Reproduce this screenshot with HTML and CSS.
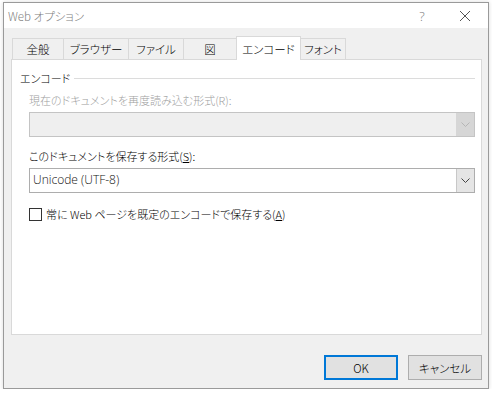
FILE: index.html
```html
<!DOCTYPE html>
<html lang="ja">
<head>
    <meta charset="UTF-8">
    <title>Web オプション</title>
    <link rel="stylesheet" href="styles.css">
</head>
<body>
    <div class="dialog">
        <div class="titlebar">
            <span class="title">Web オプション</span>
            <span class="help">?</span>
            <span class="close">
                <svg width="12" height="12" viewBox="0 0 12 12"><path d="M1 1L11 11M11 1L1 11" stroke="#555" stroke-width="1" fill="none"/></svg>
            </span>
        </div>
        <div class="content">
            <div class="tabs">
                <div class="tab t1">全般</div>
                <div class="tab t2">ブラウザー</div>
                <div class="tab t3">ファイル</div>
                <div class="tab t4">図</div>
                <div class="tab t5 active">エンコード</div>
                <div class="tab t6">フォント</div>
            </div>
            <div class="panel">
                <div class="group-head">
                    <span>エンコード</span>
                    <div class="line"></div>
                </div>
                <div class="group">
                    <div class="label disabled">現在のドキュメントを再度読み込む形式(R):</div>
                    <div class="select is-disabled">
                        <div class="value"></div>
                        <div class="arrow">
                            <svg width="9" height="5" viewBox="0 0 9 5"><path d="M0.5 0.5L4.5 4.5L8.5 0.5" stroke="#b5b5b5" fill="none"/></svg>
                        </div>
                    </div>
                    <div class="label">このドキュメントを保存する形式(<u>S</u>):</div>
                    <div class="select">
                        <div class="value">Unicode (UTF-8)</div>
                        <div class="arrow">
                            <svg width="9" height="5" viewBox="0 0 9 5"><path d="M0.5 0.5L4.5 4.5L8.5 0.5" stroke="#444" fill="none"/></svg>
                        </div>
                    </div>
                    <label class="check">
                        <span class="box"></span>
                        <span>常に Web ページを既定のエンコードで保存する(<u>A</u>)</span>
                    </label>
                </div>
            </div>
            <div class="footer">
                <button class="btn default">OK</button>
                <button class="btn">キャンセル</button>
            </div>
        </div>
    </div>
</body>
</html>
```

FILE: styles.css
```css
body {
    margin: 0;
    background: #fff;
    font-family: "Noto Sans CJK JP", "Noto Sans", sans-serif;
    font-size: 11px;
    font-weight: 300;
    font-feature-settings: "palt";
    color: #000;
}
.dialog {
    margin: 2px 0 0 3px;
    width: 486px;
    height: 387px;
    box-sizing: border-box;
    border: 1px solid #9a9a9a;
    background: #f0f0f0;
    display: flex;
    flex-direction: column;
    box-shadow: 0 0 4px rgba(0,0,0,0.15);
}
.titlebar {
    height: 25px;
    background: #fff;
    display: flex;
    align-items: center;
    padding-left: 4px;
    color: #808080;
    font-size: 11.5px;
}
.title {
    flex: 1;
}
.help {
    width: 40px;
    text-align: center;
    color: #777;
    font-family: "Open Sans", sans-serif;
    font-size: 13px;
}
.close {
    width: 46px;
    display: flex;
    justify-content: center;
}
.content {
    flex: 1;
    display: flex;
    flex-direction: column;
    padding: 7px 6px 0 7px;
}
.tabs {
    display: flex;
    align-items: flex-end;
    height: 24px;
    padding-left: 1px;
}
.tab {
    height: 21px;
    box-sizing: border-box;
    border: 1px solid #d9d9d9;
    border-bottom: none;
    margin-right: -1px;
    display: flex;
    align-items: center;
    justify-content: center;
    background: #f0f0f0;
    font-size: 11.5px;
}
.t1 { width: 52px; }
.t2 { width: 66px; }
.t3 { width: 56px; }
.t4 { width: 54px; }
.t5 { width: 65px; }
.t6 { width: 46px; }
.tab.active {
    height: 24px;
    background: #fff;
    margin-bottom: -1px;
    position: relative;
    z-index: 1;
}
.panel {
    height: 276px;
    box-sizing: border-box;
    background: #fff;
    border: 1px solid #d9d9d9;
    padding: 10px 6px 0 8px;
}
.group-head {
    display: flex;
    align-items: center;
    gap: 4px;
}
.group-head .line {
    flex: 1;
    border-top: 1px solid #dcdcdc;
}
.group {
    padding-left: 9px;
}
.label {
    margin-top: 6px;
    height: 18px;
    line-height: 18px;
}
.label.disabled {
    color: #a0a0a0;
    margin-top: 5px;
}
.label + .select {
    margin-top: 3px;
}
.select + .label {
    margin-top: 10px;
}
.select {
    height: 25px;
    box-sizing: border-box;
    border: 1px solid #adadad;
    display: flex;
    background: #fff;
}
.select .value {
    flex: 1;
    padding-left: 3px;
    line-height: 22px;
    font-family: "Open Sans", "Noto Sans CJK JP", sans-serif;
    font-size: 12px;
    font-weight: 300;
    color: #111;
}
.select .arrow {
    width: 17px;
    background: #e5e5e5;
    border-left: 1px solid #c8c8c8;
    display: flex;
    align-items: center;
    justify-content: center;
}
.select.is-disabled {
    background: #efefef;
    border-color: #c4c4c4;
}
.select.is-disabled .arrow {
    background: #d6d6d6;
    border-left-color: #d6d6d6;
}
.check {
    margin-top: 13px;
    display: flex;
    align-items: center;
    gap: 4px;
}
.check .box {
    width: 13px;
    height: 13px;
    box-sizing: border-box;
    border: 1px solid #333;
    background: #fff;
}
.footer {
    display: flex;
    justify-content: flex-end;
    gap: 10px;
    padding-top: 20px;
}
.btn {
    width: 74px;
    height: 25px;
    box-sizing: border-box;
    border: 1px solid #adadad;
    background: #e1e1e1;
    font-family: "Noto Sans CJK JP", "Noto Sans", sans-serif;
    font-size: 11.5px;
    font-weight: 300;
    font-feature-settings: "palt";
    padding: 0;
}
.btn.default {
    border: 2px solid #0078d7;
}
```
